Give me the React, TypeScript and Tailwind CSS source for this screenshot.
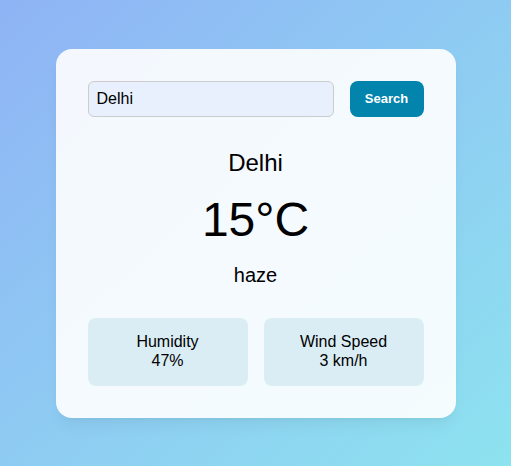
export default function App() {
  return (
    <div
      className="min-h-screen flex items-center justify-center bg-gradient-to-br from-[#8fb3f5] to-[#8de3ef]"
      style={{ fontFamily: '"Liberation Sans", Arial, sans-serif' }}
    >
      <div className="w-[400px] rounded-2xl bg-white/90 p-8 text-black shadow-lg shadow-black/5">
        {/* search row */}
        <div className="flex gap-4">
          <input
            defaultValue="Delhi"
            className="h-9 flex-1 rounded-md border border-[#cccccc] bg-[#e8f0fe] px-2 text-base outline-none"
          />
          <button className="h-9 w-[74px] rounded-lg bg-[#0284ad] text-[13px] font-bold text-white">
            Search
          </button>
        </div>

        {/* current weather */}
        <div className="text-center">
          <h2 className="mt-[28px] text-2xl leading-9">Delhi</h2>
          <div className="mt-[15px] text-5xl leading-none">15°C</div>
          <p className="mt-4 text-xl leading-[30px]">haze</p>
        </div>

        {/* details */}
        <div className="mt-[28px] grid grid-cols-2 gap-4">
          <div className="flex h-[68px] flex-col justify-center rounded-lg bg-[#daedf5] text-center text-base leading-[1.15]">
            <div>Humidity</div>
            <div>47%</div>
          </div>
          <div className="flex h-[68px] flex-col justify-center rounded-lg bg-[#daedf5] text-center text-base leading-[1.15]">
            <div>Wind Speed</div>
            <div>3 km/h</div>
          </div>
        </div>
      </div>
    </div>
  );
}
